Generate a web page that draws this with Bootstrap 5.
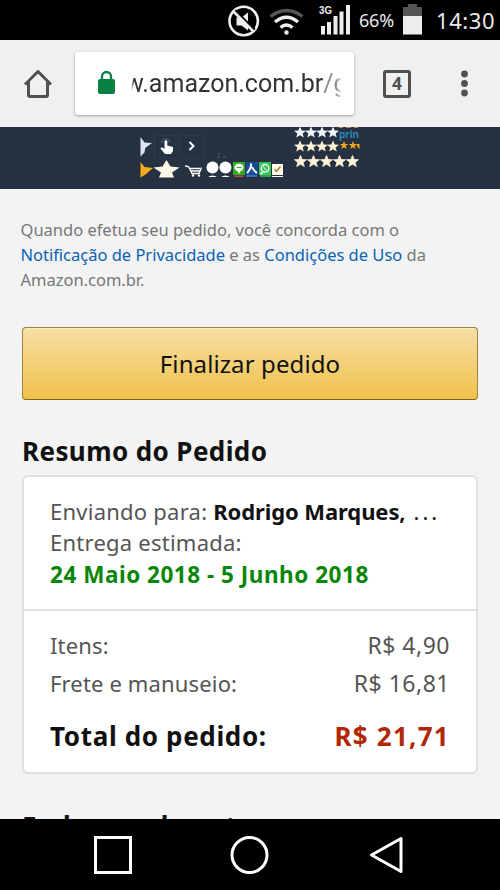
<!DOCTYPE html>
<html lang="pt-BR">
<head>
<meta charset="utf-8">
<meta name="viewport" content="width=device-width, initial-scale=1">
<title>Finalizar pedido</title>
<link href="https://cdn.jsdelivr.net/npm/bootstrap@5.3.0/dist/css/bootstrap.min.css" rel="stylesheet">
<style>
body{font-family:"Noto Sans",sans-serif;background:#f3f3f3;color:#111}
svg{display:block;flex:none}
.screen{width:500px;height:890px}
.status{height:40px;background:#000;color:#e8e8e8}
.status-pct{font-size:18px;letter-spacing:-.2px;width:36px;line-height:40px}
.status-time{font-size:22px;letter-spacing:.6px;width:60px;line-height:40px}
.browser{height:87px;background:#f0f0f0;color:#505050}
.omnibox{width:279px;height:63px;border-radius:3px;box-shadow:0 1px 3px rgba(0,0,0,.35);margin-left:23px}
.url{width:211px;font:25px/36px Roboto,sans-serif;color:#333;-webkit-mask-image:linear-gradient(90deg,transparent,#000 3px,#000 205px,transparent);mask-image:linear-gradient(90deg,transparent,#000 3px,#000 205px,transparent)}
.url-text{margin-left:-6px}
.url-path{color:#8b8b8b}
.tabs{width:28px;height:28px;border:3px solid #505050;border-radius:3px;font:bold 18px/22px Roboto,sans-serif}
.sprites{height:62px;background:#263241}
.checkout{padding:27.5px 22px 0}
.legal{font-size:16.5px;line-height:25px;letter-spacing:-.01px;color:#777;margin:0 0 35.5px -1.5px;white-space:nowrap}
.legal a{color:#0a62b5}
.btn-order{height:73px;border:1px solid #a1843b;border-bottom-color:#856317;border-radius:4px;background:linear-gradient(#f7dfa5,#f0c14b);box-shadow:inset 0 1px 0 rgba(255,255,255,.4);font-size:24px;letter-spacing:.1px;color:#111;--bs-btn-padding-y:0;--bs-btn-padding-x:0}
.title{font-size:26px;font-weight:700;letter-spacing:.4px;line-height:34px;margin:0 0 7px}
.title.order-title{padding-top:10px}
.title.next-title{padding-top:11px}
.summary{border:2px solid #dfdfdf;border-radius:6px;height:299px}
.ship{height:134px;padding:19px 26px 0;border-bottom:2px solid #dfdfdf;font-size:22px;line-height:31.2px;letter-spacing:.24px;color:#555;white-space:nowrap}
.ship b{color:#111}
.who{letter-spacing:-.1px}
.dots{letter-spacing:3px;margin-left:2px;color:#222}
.ship .eta{color:#078607;font-size:22.5px;letter-spacing:.52px;position:relative;top:1px}
.costs{padding:16px 26px 0;font-size:22px;line-height:37.5px;letter-spacing:.15px;color:#555}
.amount{font-size:23px;letter-spacing:.5px}
.total{font-size:26px;font-weight:700;letter-spacing:.65px;line-height:38px;color:#111;margin-top:15px}
.price{color:#b12704;letter-spacing:1.25px}
.android{height:71px;background:#000}
</style>
<script src="https://cdn.jsdelivr.net/npm/bootstrap@5.3.0/dist/js/bootstrap.bundle.min.js"></script>
</head>
<body>
<div class="screen d-flex flex-column overflow-hidden">
  <header class="status d-flex flex-shrink-0 justify-content-end align-items-start">
    <svg width="132" height="40" viewBox="228 0 132 40">
      <circle cx="244.700" cy="21" r="14.200" fill="none" stroke="#eee" stroke-width="2.6"/>
      <path d="M237.500 17.500h5l6.500-5v18l-6.500-5h-5z" fill="#eee"/>
      <path d="M236 10.500l19.500 19.500" stroke="#000" stroke-width="2.500"/>
      <path d="M234.500 11.500l20 20" stroke="#eee" stroke-width="2.600"/>
      <g fill="none" stroke-width="3.400"><path d="M271.500 16.500q16-12 32 0" stroke="#555"/><path d="M276 22q11.500-9.500 23 0M281.500 27.500q6-5 12 0" stroke="#eee"/></g><circle cx="287.500" cy="32.500" r="2.200" fill="#eee"/>
      <text x="320" y="13.500" font-family="Liberation Sans" font-size="10.500" font-weight="700" fill="#eee" textLength="13" lengthAdjust="spacingAndGlyphs">3G</text>
      <path d="M322 26h4v8.500h-4zM328 22h4v12.500h-4zM334.500 16h4v18.500h-4zM340.500 11.500h4v23h-4zM347 5h4v29.500h-4z" fill="#eee"/>
    </svg>
    <span class="status-pct text-nowrap">66%</span>
    <svg width="41" height="40" viewBox="396 0 41 40"><path d="M404 7h5V4h9v3h5v10h-19z" fill="#555"/><path d="M404 16h19v18.500h-19z" fill="#eee"/></svg>
    <span class="status-time">14:30</span>
    <span class="pe-1"></span>
  </header>

  <nav class="browser d-flex flex-shrink-0 align-items-center">
    <svg class="ms-4" width="28" height="30" viewBox="24 69 28 30" fill="none" stroke="#505050" stroke-width="3"><path d="M25 84.500L38 71.500l13 13M28.500 82v13q0 1.500 1.500 1.500h16q1.500 0 1.500-1.500V82" stroke-linejoin="round"/></svg>
    <div class="omnibox bg-white d-flex align-items-center">
      <svg width="56" height="30" viewBox="75 68 56 30"><rect x="98" y="78" width="17" height="15" rx="2" fill="#0b8043"/><path d="M102 79v-3.500a4.500 4.500 0 0 1 9 0V79" fill="none" stroke="#0b8043" stroke-width="2.300"/></svg>
      <div class="url overflow-hidden text-nowrap"><div class="url-text">w.amazon.com.br<span class="url-path">/g</span></div></div>
    </div>
    <div class="tabs text-center ms-auto">4</div>
    <svg width="89" height="32" viewBox="411 68 89 32" fill="#505050"><circle cx="464.500" cy="74" r="3.400"/><circle cx="464.500" cy="83.500" r="3.400"/><circle cx="464.500" cy="93" r="3.400"/></svg>
  </nav>

  <div class="sprites flex-shrink-0">
    <svg width="500" height="62" viewBox="0 127 500 62">
      <defs><path id="star" d="M0-6l1.700 4 4.300.2-3.400 2.700L3.800 5 0 2.700-3.800 5l1.200-4.100L-6-1.800l4.300-.2z"/></defs>
      <path d="M140.500 137v19.500l4-4 .8-4.500 6.700-5-7.500-.5z" fill="#dce2ee"/>
      <path d="M140.500 162v15.500l5-3 7.500-6.500-8.500-1z" fill="#f6ad1b"/>
      <g fill="none" stroke="#303947"><rect x="154.500" y="135.500" width="23" height="23"/><rect x="180.500" y="135.500" width="23" height="23"/></g>
      <path d="M164.500 141q1.500-1.500 2.800 0v4.500l5.700 1.500v4l-2 3h-6l-4.500-5.500q.5-2 4 .5z" fill="#fff"/><path d="M162 142.500q-.5-3.500 3.500-3.500t4 3" fill="none" stroke="#8993a1" stroke-dasharray="1.500 1"/>
      <path d="M189.500 142l4 4-4 4" fill="none" stroke="#fff" stroke-width="2"/>
      <path d="M166.500 160l4 6.500 9 1-7.500 5 2 5h-15l2-5-7.500-5 9-1z" fill="#fff8e9"/>
      <path d="M185 166l3.500.5 3.500 7h7l2.500-6M189 168.500h11M191 171h9" fill="none" stroke="#fff" stroke-width="1.300"/><circle cx="193" cy="175.500" r="1.200" fill="#fff"/><circle cx="199" cy="175.500" r="1.200" fill="#fff"/>
      <g fill="#fff"><circle cx="212.500" cy="167.500" r="6"/><circle cx="225.500" cy="167.500" r="6"/><path d="M208 177q4.500-3 9 0zM221 177q4.500-3 9 0z"/></g>
      <path d="M217 157h3M223 157h3M218 154h2" stroke="#566170"/>
      <path d="M233 162h12v13h-12z" fill="#35ac22"/><ellipse cx="239" cy="167.500" rx="4.500" ry="3.800" fill="#fff"/><path d="M237 170l2 4 2-4z" fill="#fff"/><path d="M236.500 167.500h5" stroke="#35ac22"/>
      <path d="M234 175.500h10l-1 1.500h-8z" fill="#c84d42"/><path d="M246 162h12v13h-12z" fill="#164b96"/><path d="M251 163.500q.5 5-4 9.500M252 167q1 3 5 6" fill="none" stroke="#fff" stroke-width="2"/>
      <path d="M246 176h11" stroke="#386dc6" stroke-width="2"/>
      <path d="M259 162h12v13h-12z" fill="#35c65a"/><circle cx="265" cy="168.300" r="3.800" fill="none" stroke="#fff" stroke-width="1.300"/><path d="M261 172.500l-.5 1.500 2.500-.7zM263.500 166.500q.5 3 3.300 3.500" fill="none" stroke="#fff"/><path d="M260 176h11" stroke="#35c65a" stroke-width="1.500"/>
      <path d="M272 164h11v11h-11z" fill="#fff8ed"/><path d="M274.500 169.500l2 2 4-5" fill="none" stroke="#b57b32" stroke-width="1.500"/><path d="M272 176.500h11" stroke="#fff"/>
      <g fill="#f2f5ff"><use href="#star" x="300" y="132.500"/><use href="#star" x="311" y="132.500"/><use href="#star" x="322" y="132.500"/><use href="#star" x="333" y="132.500"/></g>
      <g fill="#fff2d6"><use href="#star" x="300" y="146.500"/><use href="#star" x="311" y="146.500"/><use href="#star" x="322" y="146.500"/><use href="#star" x="333" y="146.500"/></g>
      <g fill="#fff2d6" stroke="#fff2d6" stroke-width=".8"><use href="#star" x="300.500" y="161.500"/><use href="#star" x="313.500" y="161.500"/><use href="#star" x="326.500" y="161.500"/><use href="#star" x="339.500" y="161.500"/><use href="#star" x="352.500" y="161.500"/></g>
      <g fill="#f2a51d"><path d="M344 141l1.200 3h3l-2.500 2 1 3-2.700-1.700-2.700 1.700 1-3-2.500-2h3zM353 141l1.200 3h3l-2.500 2 1 3-2.700-1.700-2.700 1.700 1-3-2.500-2h3zM356.500 144h3v5l-2-2z"/></g>
      <path d="M339 127.500h4M346 127.500h5M354 127.500h4" stroke="#bd8460"/>
      <text x="339" y="137.500" font-size="11.500" font-weight="600" fill="#278fc4" textLength="20" lengthAdjust="spacingAndGlyphs">prin</text>
    </svg>
  </div>

  <main class="checkout flex-grow-1 overflow-hidden">
    <p class="legal">Quando efetua seu pedido, você concorda com o<br><a href="#" class="text-decoration-none">Notificação de Privacidade</a> e as <a href="#" class="text-decoration-none">Condições de Uso</a> da<br>Amazon.com.br.</p>
    <button class="btn btn-order w-100 d-block" type="button">Finalizar pedido</button>
    <h2 class="title order-title mt-4">Resumo do Pedido</h2>
    <section class="card summary">
      <div class="ship">
        <div>Enviando para: <b class="who">Rodrigo Marques,</b> <span class="dots">...</span></div>
        <div>Entrega estimada:</div>
        <b class="eta">24 Maio 2018 - 5 Junho 2018</b>
      </div>
      <div class="costs">
        <div class="d-flex justify-content-between"><span>Itens:</span><span class="amount">R$ 4,90</span></div>
        <div class="d-flex justify-content-between"><span>Frete e manuseio:</span><span class="amount">R$ 16,81</span></div>
        <div class="total d-flex justify-content-between"><span>Total do pedido:</span><span class="price">R$ 21,71</span></div>
      </div>
    </section>
    <h2 class="title next-title mt-4">Endereço de entrega</h2>
  </main>

  <footer class="android flex-shrink-0">
    <svg width="500" height="71" viewBox="0 819 500 71" fill="none" stroke="#fff" stroke-width="3"><path d="M95.500 837.500h35v35h-35z"/><circle cx="249.500" cy="855" r="17.500"/><path d="M371.500 855l29.500-16.500v33z" stroke-linejoin="round"/></svg>
  </footer>
</div>
</body>
</html>
